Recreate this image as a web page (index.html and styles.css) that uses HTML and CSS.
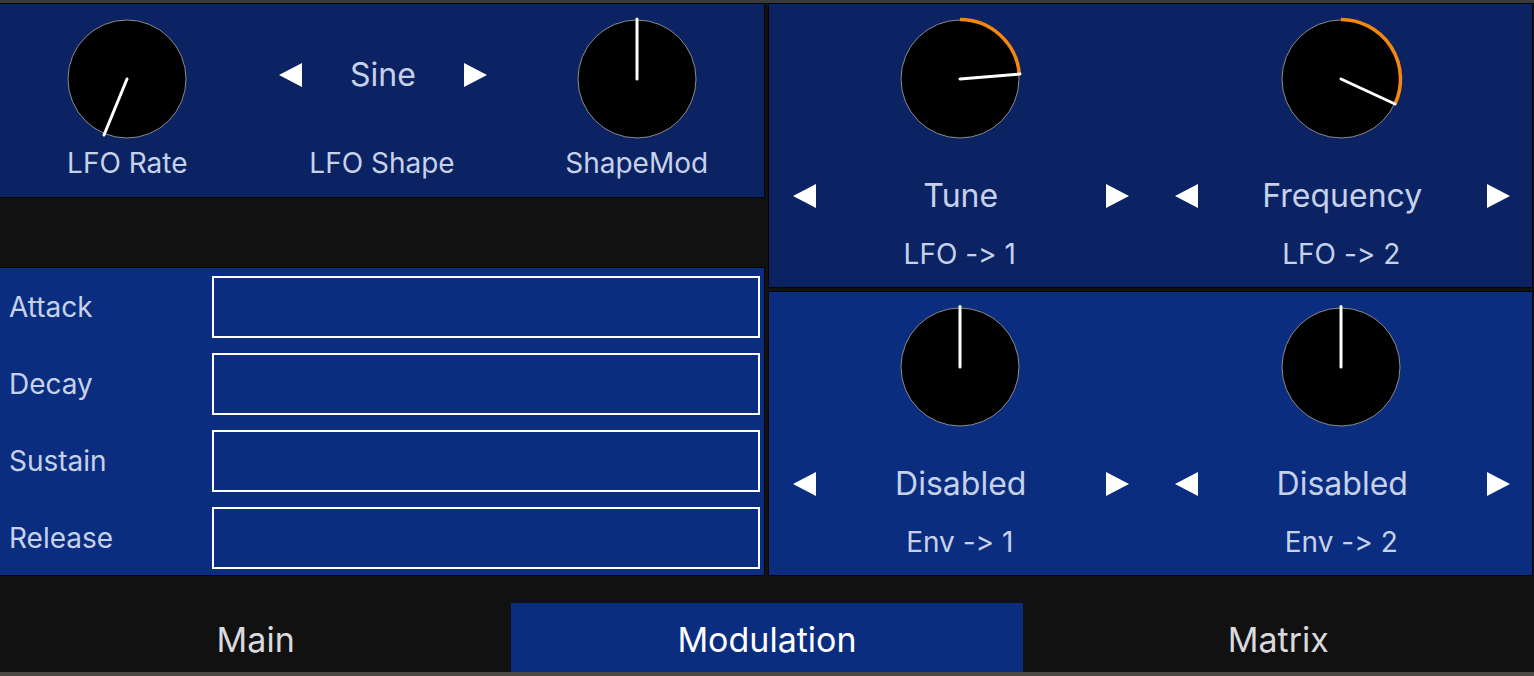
FILE: index.html
```html
<!DOCTYPE html>
<html>
<head>
<meta charset="utf-8">
<title>Modulation</title>
<link rel="stylesheet" href="styles.css">
</head>
<body>
<div class="app">
  <div class="topbar"></div>
  <div class="workspace">
    <div class="left">
      <section class="panel panel-dark lfo">
        <div class="col">
          <div class="knob-slot">
            <svg class="knob" viewBox="0 0 124 124"><circle cx="62" cy="62" r="59" fill="#000" stroke="#8c8c8c" stroke-width="1"/><line x1="62" y1="62" x2="39" y2="118" stroke="#fff" stroke-width="3" stroke-linecap="round"/></svg>
          </div>
          <div class="label lfo-label">LFO Rate</div>
        </div>
        <div class="col">
          <div class="knob-slot shifted">
            <div class="selector">
              <svg class="tri" viewBox="0 0 23 24"><polygon points="23,0 23,24 0,12" fill="#fff"/></svg>
              <span class="value">Sine</span>
              <svg class="tri" viewBox="0 0 23 24"><polygon points="0,0 0,24 23,12" fill="#fff"/></svg>
            </div>
          </div>
          <div class="label lfo-label">LFO Shape</div>
        </div>
        <div class="col">
          <div class="knob-slot">
            <svg class="knob" viewBox="0 0 124 124"><circle cx="62" cy="62" r="59" fill="#000" stroke="#8c8c8c" stroke-width="1"/><line x1="62" y1="62" x2="62" y2="2" stroke="#fff" stroke-width="3" stroke-linecap="round"/></svg>
          </div>
          <div class="label lfo-label">ShapeMod</div>
        </div>
      </section>
      <div class="spacer"></div>
      <section class="panel panel-bright adsr">
        <div class="adsr-label">Attack</div><div class="adsr-box"></div>
        <div class="adsr-label">Decay</div><div class="adsr-box"></div>
        <div class="adsr-label">Sustain</div><div class="adsr-box"></div>
        <div class="adsr-label">Release</div><div class="adsr-box"></div>
      </section>
    </div>
    <div class="right">
      <section class="panel panel-dark mod">
        <div class="col">
          <svg class="knob" viewBox="0 0 124 124"><circle cx="62" cy="62" r="59" fill="#000" stroke="#8c8c8c" stroke-width="1"/><path d="M62 2.5 A59.5 59.5 0 0 1 121.3 57" fill="none" stroke="#f5860f" stroke-width="3.5"/><line x1="62" y1="62" x2="122" y2="57" stroke="#fff" stroke-width="3" stroke-linecap="round"/></svg>
          <div class="selector mod-selector">
            <svg class="tri" viewBox="0 0 23 24"><polygon points="23,0 23,24 0,12" fill="#fff"/></svg>
            <span class="value">Tune</span>
            <svg class="tri" viewBox="0 0 23 24"><polygon points="0,0 0,24 23,12" fill="#fff"/></svg>
          </div>
          <div class="label mod-label">LFO -&gt; 1</div>
        </div>
        <div class="col">
          <svg class="knob" viewBox="0 0 124 124"><circle cx="62" cy="62" r="59" fill="#000" stroke="#8c8c8c" stroke-width="1"/><path d="M62 2.5 A59.5 59.5 0 0 1 116 87" fill="none" stroke="#f5860f" stroke-width="3.5"/><line x1="62" y1="62" x2="116" y2="87" stroke="#fff" stroke-width="3" stroke-linecap="round"/></svg>
          <div class="selector mod-selector">
            <svg class="tri" viewBox="0 0 23 24"><polygon points="23,0 23,24 0,12" fill="#fff"/></svg>
            <span class="value">Frequency</span>
            <svg class="tri" viewBox="0 0 23 24"><polygon points="0,0 0,24 23,12" fill="#fff"/></svg>
          </div>
          <div class="label mod-label">LFO -&gt; 2</div>
        </div>
      </section>
      <section class="panel panel-bright mod">
        <div class="col">
          <svg class="knob" viewBox="0 0 124 124"><circle cx="62" cy="62" r="59" fill="#000" stroke="#8c8c8c" stroke-width="1"/><line x1="62" y1="62" x2="62" y2="1.5" stroke="#fff" stroke-width="3" stroke-linecap="round"/></svg>
          <div class="selector mod-selector">
            <svg class="tri" viewBox="0 0 23 24"><polygon points="23,0 23,24 0,12" fill="#fff"/></svg>
            <span class="value">Disabled</span>
            <svg class="tri" viewBox="0 0 23 24"><polygon points="0,0 0,24 23,12" fill="#fff"/></svg>
          </div>
          <div class="label mod-label">Env -&gt; 1</div>
        </div>
        <div class="col">
          <svg class="knob" viewBox="0 0 124 124"><circle cx="62" cy="62" r="59" fill="#000" stroke="#8c8c8c" stroke-width="1"/><line x1="62" y1="62" x2="62" y2="1.5" stroke="#fff" stroke-width="3" stroke-linecap="round"/></svg>
          <div class="selector mod-selector">
            <svg class="tri" viewBox="0 0 23 24"><polygon points="23,0 23,24 0,12" fill="#fff"/></svg>
            <span class="value">Disabled</span>
            <svg class="tri" viewBox="0 0 23 24"><polygon points="0,0 0,24 23,12" fill="#fff"/></svg>
          </div>
          <div class="label mod-label">Env -&gt; 2</div>
        </div>
      </section>
    </div>
  </div>
  <nav class="tabs">
    <div class="tab">Main</div>
    <div class="tab active">Modulation</div>
    <div class="tab">Matrix</div>
  </nav>
  <div class="bottombar"></div>
</div>
</body>
</html>
```
FILE: styles.css
```css
html, body {
  margin: 0;
  padding: 0;
  background: #111111;
}
body {
  width: 1534px;
  height: 676px;
  overflow: hidden;
  font-family: Inter, "Noto Sans", "Liberation Sans", sans-serif;
  font-feature-settings: "calt" 0, "liga" 0;
  font-variant-ligatures: none;
  color: #c6d2ea;
}
.app {
  display: flex;
  flex-direction: column;
  height: 676px;
}
.topbar {
  height: 3px;
  background: #3a3a3a;
  border-bottom: 1px solid #111111;
}
.workspace {
  display: flex;
  gap: 5px;
  height: 571px;
  padding-right: 2px;
}
.left {
  width: 764px;
  display: flex;
  flex-direction: column;
}
.right {
  width: 763px;
  display: flex;
  flex-direction: column;
  gap: 5px;
}
.panel {
  box-shadow: 0 0 0 1px #050505;
}
.panel-dark {
  background: #0b2363;
}
.panel-bright {
  background: #0b2d80;
}
.lfo {
  height: 193px;
  display: grid;
  grid-template-columns: repeat(3, 1fr);
}
.spacer {
  height: 71px;
}
.col {
  display: flex;
  flex-direction: column;
  align-items: center;
  padding-top: 13px;
  min-width: 0;
}
.knob-slot {
  width: 100%;
  height: 124px;
  display: flex;
  align-items: center;
  justify-content: center;
  box-sizing: border-box;
}
.knob-slot.shifted {
  padding-bottom: 8px;
}
.knob {
  width: 124px;
  height: 124px;
  display: block;
  flex: none;
}
.selector {
  width: 100%;
  box-sizing: border-box;
  display: flex;
  align-items: center;
  padding: 0 22px 0 24px;
}
.tri {
  width: 23px;
  height: 24px;
  display: block;
  flex: none;
}
.value {
  flex: 1;
  text-align: center;
  font-size: 32px;
  line-height: 40px;
}
.label {
  font-size: 28px;
  line-height: 34px;
  white-space: nowrap;
}
.lfo-label {
  margin-top: 5px;
}
.mod {
  height: 283px;
  display: grid;
  grid-template-columns: 1fr 1fr;
}
.mod-selector {
  margin-top: 35px;
}
.mod-label {
  margin-top: 21px;
}
.adsr {
  height: 307px;
  box-sizing: border-box;
  padding: 8px 4px 6px 0;
  display: grid;
  grid-template-columns: 212px 1fr;
  grid-auto-rows: 62px;
  row-gap: 15px;
}
.adsr-label {
  padding-left: 9px;
  display: flex;
  align-items: center;
  font-size: 28px;
}
.adsr-box {
  border: 2px solid #ffffff;
}
.tabs {
  height: 97px;
  display: grid;
  grid-template-columns: repeat(3, 1fr);
  align-items: end;
}
.tab {
  height: 69px;
  box-sizing: border-box;
  padding-top: 3px;
  display: flex;
  align-items: center;
  justify-content: center;
  font-size: 34px;
  color: #d9d9de;
}
.tab.active {
  background: #0b2d80;
  color: #ffffff;
}
.bottombar {
  height: 4px;
  background: #4a4840;
}
```
